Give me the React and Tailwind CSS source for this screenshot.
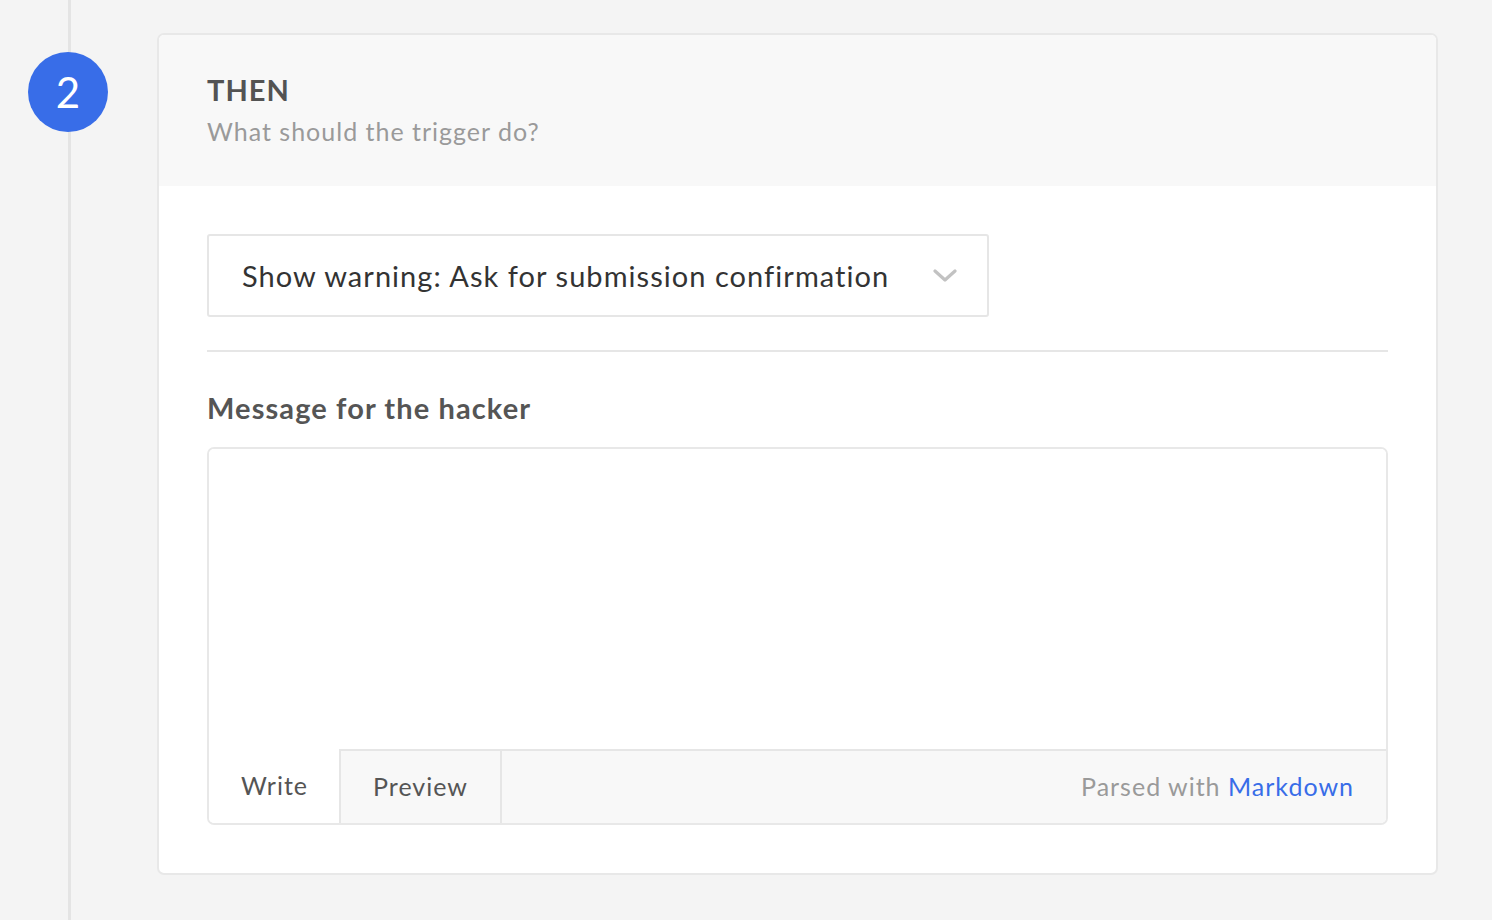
import React from 'react'

function Chevron() {
  return (
    <svg width="24" height="14" viewBox="0 0 24 14" fill="none">
      <path d="M2 2l10 9 10-9" stroke="#c2c2c2" strokeWidth="3.2" strokeLinecap="round" strokeLinejoin="round" />
    </svg>
  )
}

export default function App() {
  return (
    <div className="min-h-[920px] w-full bg-[#f4f4f4] flex font-['Lato',sans-serif]">
      {/* timeline rail */}
      <div className="w-[157px] shrink-0 relative">
        <div className="absolute left-[68px] top-0 bottom-0 w-[3px] bg-[#e4e4e4]" />
        <div className="absolute left-[28px] top-[52px] w-[80px] h-[80px] rounded-full bg-[#386de8] flex items-center justify-center text-white text-[42px] leading-none">
          2
        </div>
      </div>

      <div className="pt-[33px] pb-[44px]">
        <div className="w-[1281px] border-2 border-[#e8e8e8] rounded-[7px] bg-white overflow-hidden">
          <div className="bg-[#f8f8f8] h-[151px] px-[48px] pt-[37px]">
            <div className="text-[29px] font-bold text-[#535353] leading-[36px] tracking-[1px]">THEN</div>
            <div className="text-[25px] text-[#9a9a9a] leading-[34px] mt-[6px] tracking-[1px]">What should the trigger do?</div>
          </div>

          <div className="px-[48px] pt-[48px] pb-[48px]">
            <div className="w-[782px] h-[83px] border-2 border-[#e6e6e6] rounded-[3px] flex items-center justify-between pl-[33px] pr-[30px]">
              <span className="text-[29px] text-[#333] tracking-[1.05px]">Show warning: Ask for submission confirmation</span>
              <Chevron />
            </div>

            <div className="h-[2px] bg-[#e6e6e6] mt-[33px]" />

            <div className="text-[29px] font-bold text-[#555] mt-[38px] leading-[36px] tracking-[1.1px]">Message for the hacker</div>

            <div className="mt-[21px] h-[378px] border-2 border-[#e8e8e8] rounded-[7px] flex flex-col overflow-hidden">
              <div className="flex-1 bg-white" />
              <div className="h-[74px] flex text-[25px] tracking-[1px]">
                <div className="w-[130px] bg-white flex items-center pl-[32px] text-[#555]">Write</div>
                <div className="w-[163px] bg-[#f8f8f8] border-t-2 border-l-2 border-r-2 border-[#e6e6e6] flex items-center justify-center text-[#555]">Preview</div>
                <div className="flex-1 bg-[#f8f8f8] border-t-2 border-[#e6e6e6] flex items-center justify-end pr-[32px]">
                  <span className="text-[#9a9a9a]">Parsed with&nbsp;</span>
                  <span className="text-[#386de8]">Markdown</span>
                </div>
              </div>
            </div>
          </div>
        </div>
      </div>
    </div>
  )
}
